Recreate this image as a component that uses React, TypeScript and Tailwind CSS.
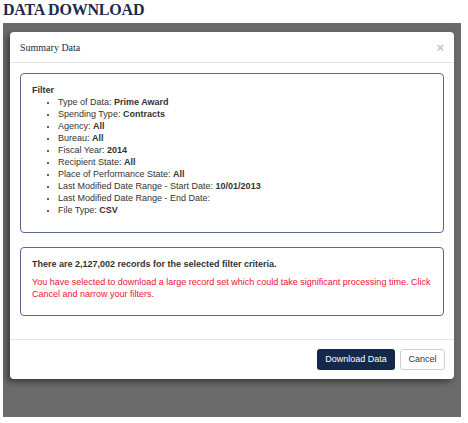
export default function App() {
    const items: [string, string][] = [
        ['Type of Data: ', 'Prime Award'],
        ['Spending Type: ', 'Contracts'],
        ['Agency: ', 'All'],
        ['Bureau: ', 'All'],
        ['Fiscal Year: ', '2014'],
        ['Recipient State: ', 'All'],
        ['Place of Performance State: ', 'All'],
        ['Last Modified Date Range - Start Date: ', '10/01/2013'],
        ['Last Modified Date Range - End Date: ', ''],
        ['File Type: ', 'CSV'],
    ];

    return (
        <div className="w-[468px] h-[423px] bg-white overflow-hidden font-['Liberation_Sans',Arial,sans-serif]">
            <h1 className="h-[23px] pl-[3px] pt-[1px] text-[16px] leading-[18px] font-bold tracking-[-0.2px] text-[#1b2b50] font-['Liberation_Serif','Times_New_Roman',serif]">
                DATA DOWNLOAD
            </h1>

            <div className="ml-[3px] w-[458px] h-[394px] bg-[#6b6b6b] pl-[7px] pt-[9px]">
                <div className="w-[444px] h-[347px] bg-white rounded-[4px] shadow-[-3px_3px_6px_rgba(0,0,0,0.45)] flex flex-col">
                    {/* Header */}
                    <div className="h-[31px] shrink-0 flex items-center justify-between pl-[10px] pr-[10px] border-b border-[#e5e5e5]">
                        <span className="text-[10px] text-[#1b2b50] font-['Liberation_Serif','Times_New_Roman',serif]">Summary Data</span>
                        <span className="text-[13px] leading-none font-bold text-[#c4c4c4]">×</span>
                    </div>

                    {/* Body */}
                    <div className="flex-1 px-[10px] pt-[10px] text-[9px] leading-[12px] text-[#333]">
                        <div className="h-[160px] border border-[#5b6a87] rounded-[4px] pl-[11px] pt-[10px]">
                            <div className="font-bold">Filter</div>
                            <ul className="list-disc pl-[26px] marker:text-[8px]">
                                {items.map(([label, value]) => (
                                    <li key={label}>
                                        {label}
                                        {value && <span className="font-bold">{value}</span>}
                                    </li>
                                ))}
                            </ul>
                        </div>

                        <div className="mt-[14px] h-[69px] border border-[#5b6a87] rounded-[4px] pl-[11px] pt-[10px]">
                            <div className="font-bold">There are 2,127,002 records for the selected filter criteria.</div>
                            <p className="mt-[6px] text-[#ee1133] pr-[10px]">
                                You have selected to download a large record set which could take significant processing time. Click Cancel and narrow your filters.
                            </p>
                        </div>
                    </div>

                    {/* Footer */}
                    <div className="h-[40px] shrink-0 border-t border-[#e5e5e5] flex items-center justify-end gap-[5px] pr-[9px]">
                        <button className="h-[21px] w-[78px] rounded-[3px] bg-[#14284b] text-white text-[9px]">Download Data</button>
                        <button className="h-[21px] w-[45px] rounded-[3px] bg-white border border-[#d0d0d0] text-[#333] text-[9px]">Cancel</button>
                    </div>
                </div>
            </div>
        </div>
    );
}
